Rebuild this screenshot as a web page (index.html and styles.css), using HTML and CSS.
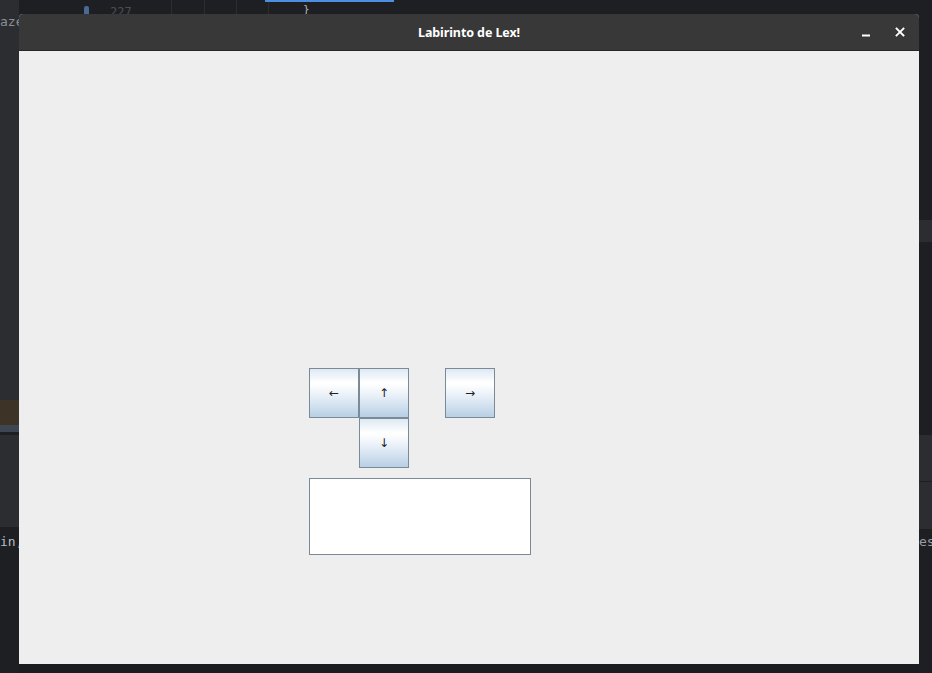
FILE: index.html
```html
<!DOCTYPE html>
<html lang="pt">
<head>
<meta charset="utf-8">
<title>Labirinto de Lex!</title>
<link rel="stylesheet" href="styles.css">
</head>
<body>
<div class="desktop">
  <div class="ide-top">
    <span class="ide-dot"></span>
    <span class="ide-line">227</span>
    <span class="ide-sep s1"></span>
    <span class="ide-sep s2"></span>
    <span class="ide-sep s3"></span>
    <span class="ide-sep s4"></span>
    <span class="ide-tab"></span>
    <span class="ide-brace">}</span>
  </div>
  <div class="ide-left">
    <div class="bl b1"><span>aze</span></div>
    <div class="bl b2"></div>
    <div class="bl b3"></div>
    <div class="bl b4"></div>
    <div class="bl b5"></div>
    <div class="bl b6"><span>in,</span></div>
  </div>
  <div class="ide-right">
    <div class="br r1"></div>
    <div class="br r2"></div>
    <div class="br r3"></div>
    <div class="br r4"></div>
    <div class="br r5"></div>
    <div class="br r6"><span>es</span></div>
  </div>

  <div class="window">
    <div class="titlebar">
      <span class="title">Labirinto de Lex!</span>
      <div class="controls">
        <button class="ctl" aria-label="Minimizar">
          <svg width="10" height="10" viewBox="0 0 10 10"><rect x="1" y="7.5" width="8" height="2" fill="#ffffff"/></svg>
        </button>
        <button class="ctl" aria-label="Fechar">
          <svg width="10" height="10" viewBox="0 0 10 10"><path d="M1.5 1.5 L8.5 8.5 M8.5 1.5 L1.5 8.5" stroke="#ffffff" stroke-width="1.8" stroke-linecap="square"/></svg>
        </button>
      </div>
    </div>
    <div class="content">
      <div class="pad">
        <button class="key k-left">←</button>
        <button class="key k-up">↑</button>
        <button class="key k-right">→</button>
        <button class="key k-down">↓</button>
      </div>
      <div class="output"></div>
    </div>
  </div>
</div>
</body>
</html>
```
FILE: styles.css
```css
html, body {
  margin: 0;
  padding: 0;
}
body {
  width: 932px;
  height: 673px;
  overflow: hidden;
  background: #1b1c1f;
  font-family: "Noto Sans", "DejaVu Sans", sans-serif;
}
.desktop {
  position: relative;
  width: 932px;
  height: 673px;
  background: #1b1c1f;
}

/* Background IDE pieces (free canvas behind the window) */
.ide-top {
  position: absolute;
  left: 0;
  top: 0;
  width: 932px;
  height: 14px;
  background: #1e1f22;
}
.ide-top::before {
  content: "";
  position: absolute;
  left: 0;
  top: 0;
  width: 19px;
  height: 14px;
  background: #2b2d30;
}
.ide-dot {
  position: absolute;
  left: 84px;
  top: 6px;
  width: 5px;
  height: 8px;
  border-radius: 2px 2px 0 0;
  background: #4a6a96;
}
.ide-line {
  position: absolute;
  left: 110px;
  top: 6px;
  font-family: "DejaVu Sans Mono", monospace;
  font-size: 12px;
  line-height: 12px;
  color: #4b4e55;
}
.ide-sep {
  position: absolute;
  top: 0;
  width: 1px;
  height: 14px;
  background: #2b2d30;
}
.s1 { left: 171px; }
.s2 { left: 204px; }
.s3 { left: 236px; }
.s4 { left: 268px; }
.ide-tab {
  position: absolute;
  left: 265px;
  top: 0;
  width: 129px;
  height: 2px;
  background: #4e8ee0;
}
.ide-brace {
  position: absolute;
  left: 303px;
  top: 4px;
  font-family: "DejaVu Sans Mono", monospace;
  font-size: 11px;
  line-height: 11px;
  color: #b0b3b8;
}

.ide-left {
  position: absolute;
  left: 0;
  top: 14px;
  width: 19px;
  height: 659px;
  display: flex;
  flex-direction: column;
}
.bl { flex: none; width: 19px; position: relative; overflow: hidden; }
.b1 { height: 386px; background: #2b2d30; }
.b1 span {
  position: absolute;
  left: 0;
  top: 0;
  font-family: "DejaVu Sans Mono", monospace;
  font-size: 13px;
  line-height: 16px;
  color: #8c8f95;
}
.b2 { height: 25px; background: #3d3326; }
.b3 { height: 7px; background: #3d4652; }
.b4 { height: 3px; background: #1e1f22; }
.b5 { height: 92px; background: #2b2d30; border-bottom: 1px solid #1e1f22; }
.b6 {
  flex: 1;
  background: #1e1f22;
}
.b6 span {
  position: absolute;
  left: 0;
  top: 6px;
  font-family: "DejaVu Sans Mono", monospace;
  font-size: 13px;
  color: #b4bcc6;
}

.ide-right {
  position: absolute;
  left: 919px;
  top: 14px;
  width: 13px;
  height: 659px;
  display: flex;
  flex-direction: column;
}
.br { flex: none; width: 13px; position: relative; overflow: hidden; }
.r1 { height: 206px; background: #1e1f22; }
.r2 { height: 22px; background: #2b2d30; }
.r3 { height: 193px; background: #1e1f22; }
.r4 { height: 46px; background: #2b2d30; border-bottom: 1px solid #1e1f22; }
.r5 { height: 47px; background: #2b2d30; }
.r6 {
  flex: 1;
  background: #1e1f22;
}
.r6 span {
  position: absolute;
  left: 0;
  top: 5px;
  font-family: "DejaVu Sans Mono", monospace;
  font-size: 13px;
  color: #9a9ca2;
}

/* The window */
.window {
  position: absolute;
  left: 19px;
  top: 14px;
  width: 900px;
  height: 650px;
  display: flex;
  flex-direction: column;
  background: #eeeeee;
  border-radius: 4px 4px 0 0;
  overflow: hidden;
}
.titlebar {
  position: relative;
  flex: none;
  height: 36px;
  background: #383838;
  border-bottom: 1px solid #262626;
  display: flex;
  align-items: center;
  justify-content: center;
}
.title {
  color: #ffffff;
  font-family: "Noto Sans", sans-serif;
  font-weight: bold;
  font-size: 12.5px;
  letter-spacing: -0.1px;
}
.controls {
  position: absolute;
  right: 9px;
  top: 0;
  height: 36px;
  display: flex;
  align-items: center;
  gap: 14px;
}
.ctl {
  width: 20px;
  height: 20px;
  padding: 0;
  margin: 0;
  border: 0;
  background: transparent;
  display: flex;
  align-items: center;
  justify-content: center;
}

.content {
  flex: 1;
  background: #eeeeee;
  padding: 317px 0 0 290px;
  display: flex;
  flex-direction: column;
  align-items: flex-start;
}
.pad {
  display: grid;
  grid-template-columns: 50px 50px 50px;
  grid-template-rows: 50px 50px;
}
.pad .k-right {
  margin-left: 36px;
}
.key {
  box-sizing: border-box;
  width: 50px;
  height: 50px;
  margin: 0;
  padding: 0;
  border: 1px solid #7a8a99;
  background: linear-gradient(to bottom, #dde8f3 0%, #ffffff 28%, #ffffff 32%, #e4edf6 60%, #b8cfe5 100%);
  font-family: "DejaVu Sans", sans-serif;
  font-size: 12px;
  color: #222222;
  display: flex;
  align-items: center;
  justify-content: center;
}
.k-left { grid-column: 1; grid-row: 1; }
.k-up { grid-column: 2; grid-row: 1; }
.k-right { grid-column: 3; grid-row: 1; }
.k-down { grid-column: 2; grid-row: 2; }

.output {
  box-sizing: border-box;
  margin-top: 10px;
  width: 222px;
  height: 77px;
  background: #ffffff;
  border: 1px solid #7a8a99;
}
```
